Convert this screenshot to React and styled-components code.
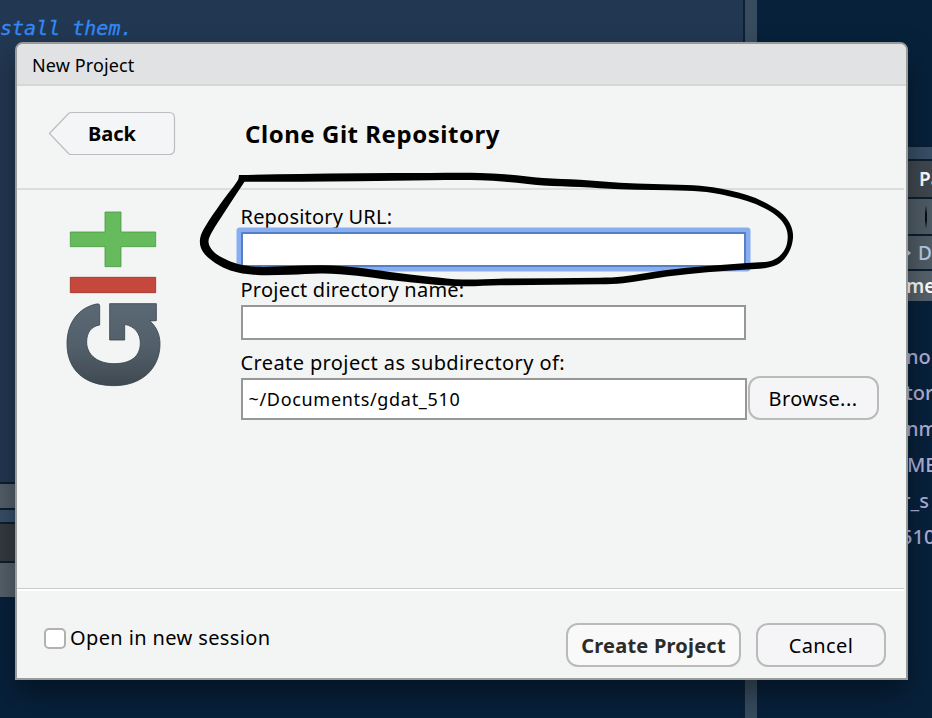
import React from "react";
import styled, { createGlobalStyle } from "styled-components";

const Global = createGlobalStyle`
  *, *::before, *::after { box-sizing: border-box; }
  body { margin: 0; overflow: hidden; }
  button, input { font: inherit; color: inherit; margin: 0; outline: none; }
`;

const Desktop = styled.div`
  position: relative;
  display: grid;
  grid-template-columns: 743px 14px 1fr;
  width: 932px;
  height: 718px;
  overflow: hidden;
  background: #07213b;
  color: #000;
  font-family: "Noto Sans", "Open Sans", sans-serif;
`;

const Column = styled.div`
  display: flex;
  flex-direction: column;
  min-width: 0;
  overflow: hidden;
`;

const Splitter = styled.div`
  background: #384c60;
  border-left: 2px solid #0f2031;
`;

const Source = styled.div`
  height: 482px;
  padding-top: 15px;
  background: #223852;
`;

const Comment = styled.pre`
  margin: 0 0 0 -12px;
  color: #3389f5;
  font: italic 20px/26px "DejaVu Sans Mono", monospace;
  -webkit-text-stroke: 0.3px #3389f5;
`;

const Strip = styled.div`
  display: flex;
  align-items: center;
  flex: none;
  height: ${(p) => p.$height}px;
  padding-left: ${(p) => p.$indent || 0}px;
  background: ${(p) => p.$fill};
  border-top: 2px solid #0c1f31;
  color: ${(p) => p.$color || "#fff"};
  font-size: 19px;
  font-weight: ${(p) => p.$weight || 600};
  white-space: nowrap;
`;

const Blank = styled.div`
  flex: none;
  height: 145px;
`;

const ToolMark = styled.span`
  width: 2px;
  height: 24px;
  background: linear-gradient(transparent, #0b0f13 35%, #0b0f13 65%, transparent);
`;

const Crumb = styled.svg`
  width: 7px;
  height: 12px;
  margin-right: 7px;
`;

const Files = styled.ul`
  margin: 0;
  padding: 38px 0 0;
  list-style: none;
  color: #aeb0d8;
  font-size: 20px;
  font-weight: 500;
  line-height: 36px;
`;

const FileName = styled.li`
  padding-left: ${(p) => p.$indent}px;
  white-space: nowrap;
`;

const Dialog = styled.section`
  position: absolute;
  left: 15px;
  top: 42px;
  display: flex;
  flex-direction: column;
  width: 893px;
  height: 638px;
  border: 2px solid #999b9b;
  border-radius: 8px 8px 0 0;
  background: #f3f5f4;
  box-shadow: 0 14px 30px rgba(0, 0, 0, 0.4);
`;

const TitleBar = styled.header`
  height: 42px;
  padding-left: 15px;
  border-bottom: 2px solid #d6d7d9;
  border-radius: 6px 6px 0 0;
  background: #e1e2e4;
  font-size: 18px;
  line-height: 43px;
  letter-spacing: 0.12px;
`;

const Banner = styled.div`
  display: flex;
  height: 104px;
  margin-right: 2px;
  padding: 25px 0 0 31px;
  border-bottom: 2px solid #dbdddc;
`;

const BackButton = styled.button`
  display: grid;
  width: 128px;
  height: 45px;
  padding: 0;
  border: 0;
  background: none;
  > * { grid-area: 1 / 1; }
`;

const BackLabel = styled.span`
  padding: 1px 0 0 40px;
  text-align: left;
  font-size: 20px;
  font-weight: 700;
  line-height: 43px;
`;

const Heading = styled.h1`
  margin: 0 0 0 69px;
  font-size: 24px;
  font-weight: 700;
  line-height: 46px;
  letter-spacing: 0.54px;
`;

const Content = styled.div`
  display: flex;
  height: 398px;
  padding: 13px 0 0 49px;
`;

const Logo = styled.svg`
  flex: none;
  width: 96px;
  height: 178px;
  margin: 8px 78.500px 0 0;
`;

const Fields = styled.div`
  display: flex;
  flex-direction: column;
`;

const Label = styled.label`
  height: 29px;
  font-size: 20px;
  line-height: 28px;
  white-space: nowrap;
  letter-spacing: ${(p) => p.$track || 0}px;
`;

const Row = styled.div`
  display: flex;
  height: 44px;
`;

const Input = styled.input`
  width: ${(p) => p.$width || 505}px;
  height: ${(p) => p.$height}px;
  padding: 0 6px;
  border: 2px solid ${(p) => (p.$focused ? "#567fc4" : "#979797")};
  border-radius: 0;
  background: #fff;
  font-size: 18px;
  letter-spacing: 0.68px;
`;

const FocusedInput = styled(Input)`
  border-radius: 1px;
  box-shadow: 0 0 0 4.5px #88adf0;
`;

const Button = styled.button`
  width: ${(p) => p.$width}px;
  height: 44px;
  padding: 0;
  border: 2px solid #bababa;
  border-radius: 12px;
  background: ${(p) => (p.$primary ? "#f8f9f8" : "#f5f5f8")};
  color: ${(p) => (p.$primary ? "#2b2b2b" : "#000")};
  font-size: 20px;
  font-weight: ${(p) => (p.$primary ? 700 : 400)};
  letter-spacing: ${(p) => (p.$primary ? 0.22 : 0.4)}px;
`;

const BrowseButton = styled(Button)`
  margin: -2px 0 0 1px;
`;

const Footer = styled.footer`
  display: flex;
  height: 90px;
  margin-right: 2px;
  padding: 32px 18px 0 27px;
  border-top: 1px solid #cbcccb;
  box-shadow: inset 0 2px #fff;
`;

const CheckRow = styled.label`
  display: flex;
  align-items: center;
  height: 32px;
  margin-right: auto;
  font-size: 20px;
  letter-spacing: 0.38px;
`;

const CheckBox = styled.input`
  appearance: none;
  width: 22px;
  height: 21px;
  margin: 2px 4px 0 0;
  border: 2px solid #b1b1b1;
  border-radius: 5px;
  background: #fff;
`;

const Actions = styled.div`
  display: flex;
  gap: 15px;
  padding-top: 2px;
`;

const Ink = styled.svg`
  position: absolute;
  left: 190px;
  top: 165px;
  pointer-events: none;
`;

// Outer and inner edges of the hand-drawn loop, both starting at its top-left corner.
const outerEdge = [
  [239, 175], [300, 174], [358, 173.3], [430, 173], [480, 173], [505, 174.3], [543, 178], [580, 179.8],
  [620, 182.7], [687, 185], [713, 187.3], [747, 195], [767, 203.5], [783, 214.5], [791, 226], [793, 238],
  [789, 252], [780, 263], [767, 267.7], [747, 269.5], [707, 272.3], [667, 276.5], [623, 283.3], [600, 284.3],
  [500, 285.3], [463, 286.3], [430, 284.3], [390, 280], [357, 275.8], [323, 273.5], [290, 274.7], [257, 275],
  [238, 272.5], [223, 267.5], [208, 257.5], [201, 248], [200.2, 238], [205, 227], [221, 203], [238, 180],
];
const innerEdge = [
  [244.5, 181.8], [300, 181.8], [358, 181.2], [430, 180.3], [480, 180.3], [505, 181.8], [543, 185.5], [580, 187],
  [620, 189.3], [687, 190.8], [713, 193], [747, 201], [767, 209.5], [780, 219], [786, 228], [787.7, 238],
  [785, 249], [777, 258], [767, 261.7], [747, 263], [707, 266], [667, 270], [623, 276.6], [600, 277.8],
  [500, 278.7], [463, 279.5], [430, 276.7], [390, 272], [357, 267.5], [323, 265.2], [290, 266], [257, 266.8],
  [238, 264], [223, 258], [213, 251], [208.5, 242], [212, 232], [224, 213],
];

function smooth(points) {
  const first = points[0];
  const loop = [...points, first];
  const at = (i) => loop[Math.max(0, Math.min(loop.length - 1, i))];
  let d = `M${first}`;
  for (let i = 0; i < loop.length - 1; i++) {
    const [a, b, c, e] = [at(i - 1), at(i), at(i + 1), at(i + 2)];
    // Handles follow the neighbours' direction, scaled to this segment so uneven spacing stays smooth.
    const len = Math.hypot(c[0] - b[0], c[1] - b[1]) / 3;
    const n1 = Math.hypot(c[0] - a[0], c[1] - a[1]) || 1;
    const n2 = Math.hypot(e[0] - b[0], e[1] - b[1]) || 1;
    d += `C${b[0] + ((c[0] - a[0]) * len) / n1},${b[1] + ((c[1] - a[1]) * len) / n1} `;
    d += `${c[0] - ((e[0] - b[0]) * len) / n2},${c[1] - ((e[1] - b[1]) * len) / n2} ${c}`;
  }
  return d + "Z";
}

function GitLogo() {
  return (
    <Logo viewBox="78 62 288 534" strokeWidth="2.5" strokeLinejoin="round">
      <defs>
        <linearGradient id="slate" x1="0" y1="0" x2="0" y2="1">
          <stop offset="0" stopColor="#5b6975" />
          <stop offset="0.5" stopColor="#53606b" />
          <stop offset="1" stopColor="#404951" />
        </linearGradient>
      </defs>
      <path fill="#66bb5d" stroke="#4b9a43" d="M195 65H243V125H347V169H243V229H195V169H91V125H195Z" />
      <path fill="#c6473b" stroke="#9c2f26" d="M91 261H347V307H91Z" />
      <path
        fill="url(#slate)"
        stroke="#37434d"
        d="M179 346Q179 339 170 341C115 352 81 398 81 460C81 540 135 586 222 586C305 586 360 535 360 460C360 432 348 407 329 392L349 391V340H209V449H254V402C285 408 301 430 301 458C301 500 270 520 222 520C175 520 140 495 140 455C140 425 155 408 179 404Z"
      />
    </Logo>
  );
}

export default function App() {
  return (
    <Desktop>
      <Global />
      <Column>
        <Source>
          <Comment>nstall them.</Comment>
        </Source>
        <Strip $height={26} $fill="#535f6a" />
        <Strip $height={14} $fill="#384f68" />
        <Strip $height={39} $fill="#353b41" />
        <Strip $height={36} $fill="#56626c" />
      </Column>
      <Splitter />
      <Column>
        <Blank />
        <Strip $height={14} $fill="#384f65" />
        <Strip $height={38} $fill="#3f474e" $indent={162}>Pa</Strip>
        <Strip $height={37} $fill="#4f5b65" $indent={168}><ToolMark /></Strip>
        <Strip $height={35} $fill="#4f5b65" $indent={148} $color="#b9cbe8" $weight={500}>
          <Crumb viewBox="0 0 7 12" fill="#d5d5d5"><path d="M0 0L7 6L0 12L2 6Z" /></Crumb>
          D
        </Strip>
        <Strip $height={32} $fill="#56616b" $indent={149}>me</Strip>
        <Files>
          <FileName $indent={149}>no</FileName>
          <FileName $indent={148}>tor</FileName>
          <FileName $indent={149}>nm</FileName>
          <FileName $indent={150}>ME</FileName>
          <FileName $indent={145}>r_s</FileName>
          <FileName $indent={144}>510</FileName>
        </Files>
      </Column>

      <Dialog>
        <TitleBar>New Project</TitleBar>
        <Banner>
          <BackButton>
            <svg width="128" height="45" fill="#f4f5f7" stroke="#bcbcbe" strokeWidth="1.2">
              <path d="M1.5 22.5L21 2Q22 1.5 24 1.5H121Q126.500 1.500 126.500 7V38Q126.500 43.500 121 43.500H24Q22 43.500 21 43Z" />
            </svg>
            <BackLabel>Back</BackLabel>
          </BackButton>
          <Heading>Clone Git Repository</Heading>
        </Banner>
        <Content>
          <GitLogo />
          <Fields>
            <Label $track={0.2}>Repository URL:</Label>
            <Row><FocusedInput $focused $height={35} aria-label="Repository URL" /></Row>
            <Label $track={0.23}>Project directory name:</Label>
            <Row><Input $height={35} aria-label="Project directory name" /></Row>
            <Label $track={0.39}>Create project as subdirectory of:</Label>
            <Row>
              <Input $width={506} $height={42} readOnly value="~/Documents/gdat_510" />
              <BrowseButton $width={131}>Browse...</BrowseButton>
            </Row>
          </Fields>
        </Content>
        <Footer>
          <CheckRow><CheckBox type="checkbox" />Open in new session</CheckRow>
          <Actions>
            <Button $primary $width={175}>Create Project</Button>
            <Button $width={130}>Cancel</Button>
          </Actions>
        </Footer>
      </Dialog>
      <Ink width="620" height="140" viewBox="190 165 620 140">
        <path fillRule="evenodd" d={smooth(outerEdge) + smooth(innerEdge)} />
      </Ink>
    </Desktop>
  );
}
